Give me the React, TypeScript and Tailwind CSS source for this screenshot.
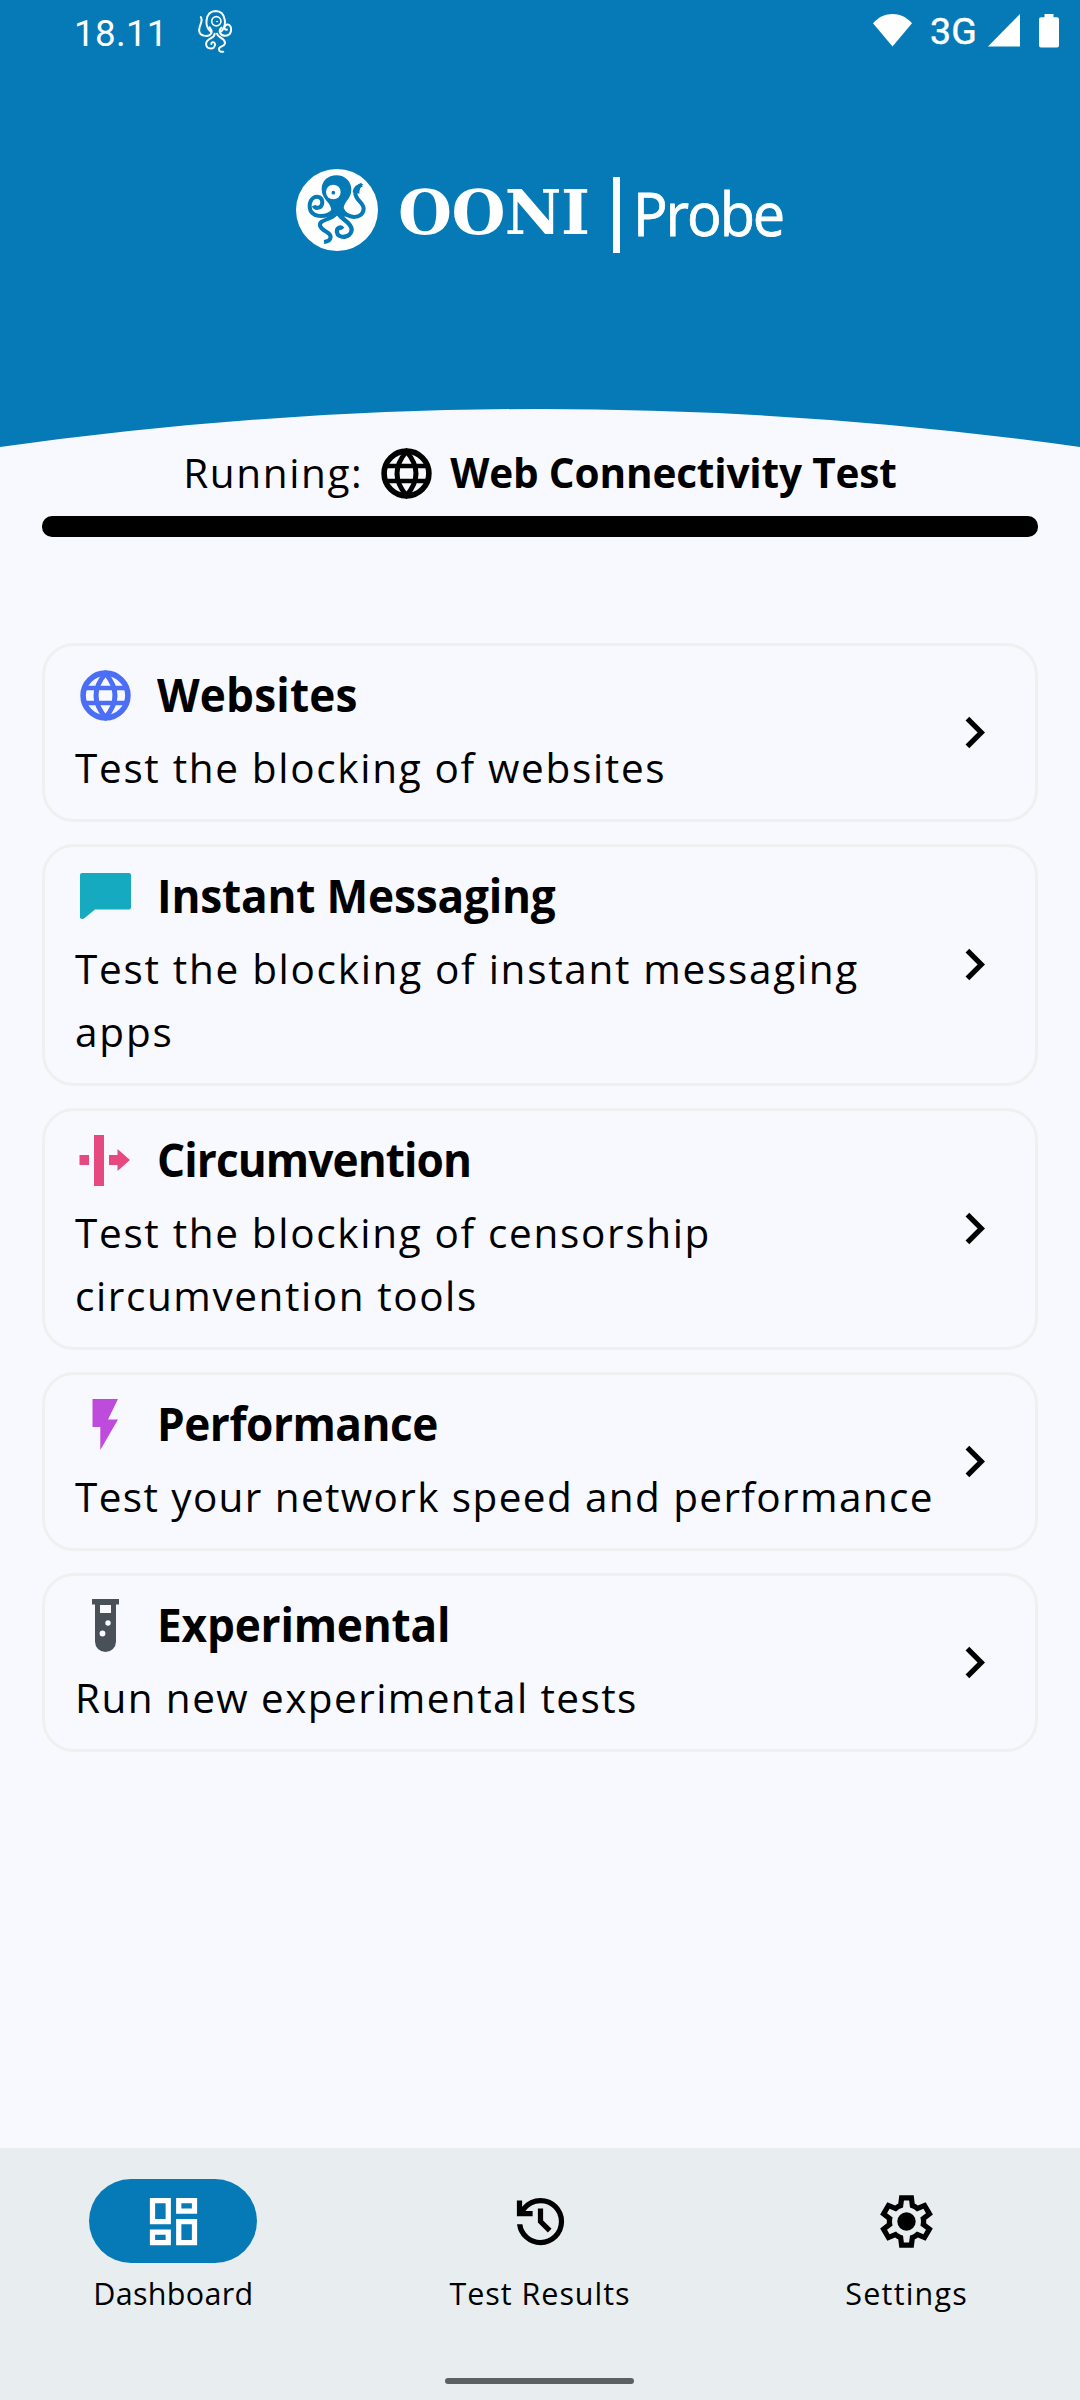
import type { ReactNode } from "react";

const BODY = "font-['Open_Sans','Noto_Sans',sans-serif]";

function Globe() {
  return (
    <svg viewBox="0 0 63 63" className="size-[63px]" fill="none" stroke="currentColor" strokeWidth="4.8">
      <circle cx="31.5" cy="31.5" r="22.4" strokeWidth="5.6" />
      <path d="M31.5 9.5C19 24 19 39 31.5 53.5C44 39 44 24 31.5 9.5Z" />
      <path d="M11 24H52M11 39H52" strokeWidth="4.6" />
    </svg>
  );
}

function Chat() {
  return (
    <svg viewBox="0 0 63 63" className="size-[63px]" fill="currentColor">
      <path d="M8 8H55a2 2 0 0 1 2 2V42.500a2 2 0 0 1-2 2H21L10 53.600Q8 54.800 6 53V10a2 2 0 0 1 2-2Z" />
    </svg>
  );
}

function Bypass() {
  return (
    <svg viewBox="0 0 63 63" className="size-[63px]" fill="currentColor">
      <path d="M20 6H30V57H20ZM5.500 26H15V36H5.500ZM35 26H43.500V20L56 31L43.500 42V36H35Z" />
    </svg>
  );
}

function Bolt() {
  return (
    <svg viewBox="0 0 63 63" className="size-[63px]" fill="currentColor">
      <path d="M18.500 6H44L34 26.500H44L26.300 57V34H18.500Z" />
    </svg>
  );
}

function TestTube() {
  return (
    <svg viewBox="0 0 63 63" className="size-[63px]" fill="currentColor" fillRule="evenodd">
      <path d="M18 5H45V10.500H42V47.500a10.500 10.500 0 0 1-21 0V10.500H18ZM26 11V19H37V11ZM31.300 29a2.700 2.700 0 1 0 5.400 0a2.700 2.700 0 1 0-5.400 0ZM25.600 39.500a2.900 2.900 0 1 0 5.800 0a2.900 2.900 0 1 0-5.800 0Z" />
    </svg>
  );
}

function Chevron() {
  return (
    <svg viewBox="0 0 24 24" className="size-[63px] shrink-0" fill="currentColor">
      <path d="M10 6 8.590 7.410 13.170 12l-4.580 4.590L10 18l6-6z" />
    </svg>
  );
}

function StatusOctopus() {
  return (
    <svg viewBox="0 0 102 130" className="h-[43px] w-[34px]" fill="none" stroke="#fff" strokeWidth="6" strokeLinecap="round">
      <path d="M39 66C18 52 20 4 53 3C86 4 88 50 68 66" />
      <circle cx="55" cy="34" r="14" strokeWidth="5" />
      <circle cx="57" cy="35" r="1" strokeWidth="3" />
      <path d="M8 21C17 34 3 44 3 62C4 82 40 84 41 66C42 60 37 56 34 52" />
      <path d="M71 53C60 62 66 77 80 78C106 78 104 43 88 44C76 46 78 62 87 59" />
      <path d="M50 72C50 88 24 84 24 103C25 122 52 120 51 104C49 94 40 96 40 103" />
      <path d="M57 72C60 86 84 84 81 101C78 112 62 108 63 119C64 127 71 127 76 126" />
    </svg>
  );
}

function LogoOctopus() {
  return (
    <svg viewBox="48 56 246 246" className="mt-px size-[82px]" fill="none" stroke="#057ab6">
      <circle cx="171" cy="179" r="123" fill="#fff" stroke="none" />
      <path
        d="M169 75C196 75 214 94 214 118C214 146 192 152 191 174C192 184 196 192 204 198L186 200L171 196L152 200L140 198C150 192 155 186 153 174C148 152 125 146 125 116C125 92 144 75 169 75Z"
        fill="#057ab6"
        stroke="none"
      />
      <circle cx="160" cy="125" r="22" fill="#fff" stroke="none" />
      <circle cx="160" cy="127" r="5.500" fill="#057ab6" stroke="none" />
      <path d="M186 176C196 206 250 210 251 174C249 154 224 148 226 126C228 114 234 107 246 103" strokeWidth="12" />
      <path d="M218 126C220 106 234 100 250 101C240 110 238 120 238 130Z" fill="#057ab6" stroke="none" />
      <path d="M158 183C140 202 88 206 89 166C90 142 108 136 119 141C130 148 130 168 116 172C108 174 103 170 101 166" strokeWidth="12" />
      <path d="M166 192C150 210 116 208 120 226C126 246 151 242 152 260C151 270 142 274 132 275" strokeWidth="12" />
      <path d="M176 190C186 210 214 214 215 238C214 264 174 266 171 246C169 232 182 228 188 236" strokeWidth="13" />
    </svg>
  );
}

interface Card {
  title: string;
  titleTracking: string;
  lines: { text: string; tracking: string }[];
  icon: ReactNode;
  color: string;
}

const cards: Card[] = [
  {
    title: "Websites",
    titleTracking: "tracking-[0.15px]",
    lines: [{ text: "Test the blocking of websites", tracking: "tracking-[1.67px]" }],
    icon: <Globe />,
    color: "text-[#4c6ef5]",
  },
  {
    title: "Instant Messaging",
    titleTracking: "tracking-[-0.2px]",
    lines: [
      { text: "Test the blocking of instant messaging", tracking: "tracking-[1.7px]" },
      { text: "apps", tracking: "tracking-[1.8px]" },
    ],
    icon: <Chat />,
    color: "text-[#15aabf]",
  },
  {
    title: "Circumvention",
    titleTracking: "tracking-[-0.95px]",
    lines: [
      { text: "Test the blocking of censorship", tracking: "tracking-[1.67px]" },
      { text: "circumvention tools", tracking: "tracking-[1.58px]" },
    ],
    icon: <Bypass />,
    color: "text-[#e64980]",
  },
  {
    title: "Performance",
    titleTracking: "tracking-[-0.5px]",
    lines: [{ text: "Test your network speed and performance", tracking: "tracking-[1.38px]" }],
    icon: <Bolt />,
    color: "text-[#be4bdb]",
  },
  {
    title: "Experimental",
    titleTracking: "tracking-[-0.2px]",
    lines: [{ text: "Run new experimental tests", tracking: "tracking-[1.42px]" }],
    icon: <TestTube />,
    color: "text-[#495057]",
  },
];

function TestCard({ card }: { card: Card }) {
  return (
    <div className="flex items-center justify-between rounded-[32px] border-[3px] border-[#f0f0f0] pt-[18px] pr-[29px] pb-[19px] pl-[29px]">
      <div className="flex w-[868px] flex-col gap-[9px]">
        <div className="flex h-[63px] items-center gap-[20px]">
          <span className={card.color}>{card.icon}</span>
          <h2 className={`origin-left scale-x-[0.96] pb-[3px] text-[46px] leading-[60px] font-bold whitespace-nowrap ${card.titleTracking}`}>{card.title}</h2>
        </div>
        <div className="pb-px pl-[1px] text-[40.5px] leading-[63px]">
          {card.lines.map((line) => (
            <p key={line.text} className={`whitespace-nowrap ${line.tracking}`}>
              {line.text}
            </p>
          ))}
        </div>
      </div>
      <Chevron />
    </div>
  );
}

function NavItem({ label, tracking, active, children }: { label: string; tracking: string; active?: boolean; children: ReactNode }) {
  return (
    <div className="flex flex-1 flex-col items-center">
      <div className={`flex h-[84px] w-[168px] items-center justify-center rounded-full ${active ? "bg-[#057ab6] text-white" : "text-black"}`}>
        {children}
      </div>
      <span className={`mt-[9px] text-[30.5px] leading-[42px] whitespace-nowrap ${tracking}`}>{label}</span>
    </div>
  );
}

export default function App() {
  return (
    <div className={`flex h-[2400px] w-[1080px] flex-col overflow-hidden bg-[#f8f9ff] text-black ${BODY}`}>
      <header className="flex h-[409px] flex-col bg-[#057ab6] text-white">
        <div className="flex h-[63px] items-start justify-between pr-[21px] pl-[74px]">
          <div className="flex items-start gap-[31px]">
            <span className="w-[93px] pt-[12px] font-['Roboto',sans-serif] text-[36.75px] leading-[43px] tracking-[0.3px]">18.11</span>
            <div className="pt-[10px]">
              <StatusOctopus />
            </div>
          </div>
          <div className="flex items-start">
            <svg viewBox="0 0 39 33" className="mt-[14px] mr-[18px] h-[33px] w-[39px]" fill="#fff">
              <path d="M0 9.200C11-3 28-3 39 9.200L19.500 32.500Z" />
            </svg>
            <span className="mt-[10px] w-[58px] font-['Roboto',sans-serif] text-[37.5px] leading-[43px] font-[450] tracking-[0.2px] [-webkit-text-stroke:0.5px_white]">3G</span>
            <svg viewBox="0 0 32 33" className="mt-[14px] h-[33px] w-[32px]" fill="#fff">
              <path d="M32 0V32.500H0Z" />
            </svg>
            <svg viewBox="0 0 20 34" className="mt-[14px] ml-[19px] h-[34px] w-[20px]" fill="#fff">
              <path d="M5.500 0H14.500V3.300H18A2 2 0 0 1 20 5.300V31.500A2 2 0 0 1 18 33.500H2A2 2 0 0 1 0 31.500V5.300A2 2 0 0 1 2 3.300H5.500Z" />
            </svg>
          </div>
        </div>
        <div className="flex h-[292px] items-center pl-[296px]">
          <LogoOctopus />
          <span className="ml-[20px] w-[194px] pt-[8px] font-['DejaVu_Serif',serif] text-[62px] leading-[82px] font-bold tracking-[-0.6px]">OONI</span>
          <div className="mt-[12px] ml-[21px] h-[76px] w-[7px] bg-white" />
          <span className="mt-[7px] ml-[13px] origin-left scale-x-[0.945] text-[61px] leading-[82px] tracking-[-2.2px] [-webkit-text-stroke:0.8px_white]">Probe</span>
        </div>
      </header>
      <svg viewBox="0 0 1080 38" className="h-[38px] w-[1080px] shrink-0" fill="#057ab6">
        <path d="M0 0H1080V38Q540-38 0 38Z" />
      </svg>

      <section className="-mt-[5px] flex flex-col px-[42px]">
        <div className="flex h-[63px] items-center justify-center text-[40.5px]">
          <span className="pb-px tracking-[1.6px]">Running:</span>
          <span className="mx-[12px]">
            <Globe />
          </span>
          <span className="pb-px font-bold tracking-[-0.15px]">Web Connectivity Test</span>
        </div>
        <div className="mt-[11px] h-[21px] rounded-[10px] bg-black" />
      </section>

      <main className="mt-[106px] flex flex-1 flex-col gap-[22px] px-[42px]">
        {cards.map((card) => (
          <TestCard key={card.title} card={card} />
        ))}
      </main>

      <nav className="flex h-[252px] shrink-0 flex-col items-center bg-[#e8eef0]">
        <div className="flex w-full gap-[20px] pt-[31px]">
          <NavItem label="Dashboard" tracking="tracking-[0.3px]" active>
            <svg viewBox="0 0 24 24" className="size-[63px]" fill="currentColor">
              <path d="M19 5v2h-4V5h4M9 5v6H5V5h4m10 8v6h-4v-6h4M9 17v2H5v-2h4M21 3h-8v6h8V3zM11 3H3v10h8V3zm10 8h-8v10h8V11zm-10 4H3v6h8v-6z" />
            </svg>
          </NavItem>
          <NavItem label="Test Results" tracking="tracking-[0.95px]">
            <svg viewBox="0 -960 960 960" className="size-[63px]" fill="currentColor">
              <path d="M480-120q-138 0-240.500-91.500T122-440h82q14 104 92.500 172T480-200q117 0 198.500-81.500T760-480q0-117-81.500-198.500T480-760q-69 0-129 32t-101 88h110v80H120v-240h80v94q51-64 124.500-99T480-840q75 0 140.500 28.500t114 77q48.500 48.500 77 114T840-480q0 75-28.500 140.500t-77 114q-48.500 48.500-114 77T480-120Zm112-192L440-464v-216h80v184l128 128-56 56Z" />
            </svg>
          </NavItem>
          <NavItem label="Settings" tracking="tracking-[1.2px]">
            <svg viewBox="0 -960 960 960" className="size-[63px]" fill="currentColor">
              <path d="m370-80-16-128q-13-5-24.500-12T307-235l-119 50L78-375l103-78q-1-7-1-13.500v-27q0-6.500 1-13.500L78-585l110-190 119 50q11-8 23-15t24-12l16-128h220l16 128q13 5 24.500 12t22.500 15l119-50 110 190-103 78q1 7 1 13.500v27q0 6.500-2 13.500l103 78-110 190-118-50q-11 8-23 15t-24 12L590-80H370Zm70-80h79l14-106q31-8 57.500-23.500T639-327l99 41 39-68-86-65q5-14 7-29.500t2-31.500q0-16-2-31.500t-7-29.500l86-65-39-68-99 42q-22-23-48.500-38.500T533-694l-13-106h-79l-14 106q-31 8-57.500 23.500T321-633l-99-41-39 68 86 64q-5 15-7 30t-2 32q0 16 2 31t7 30l-86 65 39 68 99-42q22 23 48.500 38.500T427-266l13 106Z" />
              <circle cx="480" cy="-480" r="140" />
            </svg>
          </NavItem>
        </div>
        <div className="mt-[64px] mr-px h-[6px] w-[189px] rounded-full bg-[#5b6062]" />
      </nav>
    </div>
  );
}
